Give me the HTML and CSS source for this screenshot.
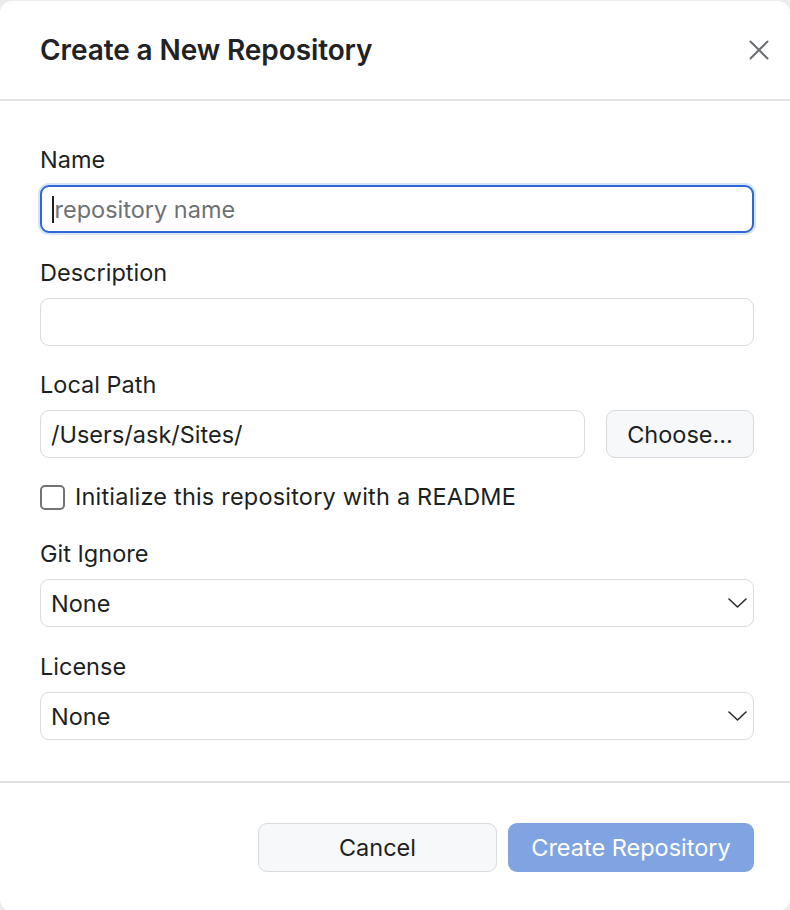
FILE: index.html
```html
<!DOCTYPE html>
<html lang="en">
<head>
<meta charset="utf-8">
<title>Create a New Repository</title>
<link rel="stylesheet" href="styles.css">
</head>
<body>
<div class="dialog">
  <header class="dialog-header">
    <h1 class="dialog-title">Create a New Repository</h1>
    <button class="close-btn" aria-label="Close">
      <svg width="20" height="20" viewBox="0 0 20 20"><path d="M1.5 1.5 L18.5 18.5 M18.5 1.5 L1.5 18.5" stroke="#6b6f75" stroke-width="2" stroke-linecap="round" fill="none"/></svg>
    </button>
  </header>
  <div class="dialog-body">
    <div class="field first">
      <div class="label">Name</div>
      <div class="input focused"><span class="caret"></span><span class="placeholder">repository name</span></div>
    </div>
    <div class="field">
      <div class="label">Description</div>
      <div class="input"></div>
    </div>
    <div class="field">
      <div class="label">Local Path</div>
      <div class="path-row">
        <div class="input grow">/Users/ask/Sites/</div>
        <button class="btn btn-secondary choose">Choose…</button>
      </div>
    </div>
    <div class="checkbox-row">
      <span class="checkbox"></span>
      <span class="checkbox-label">Initialize this repository with a README</span>
    </div>
    <div class="field gitignore">
      <div class="label">Git Ignore</div>
      <div class="input select">None
        <svg class="chevron" width="19" height="10" viewBox="0 0 19 10"><path d="M1 1 L9.5 9 L18 1" stroke="#2b2b2b" stroke-width="1.6" fill="none" stroke-linecap="round" stroke-linejoin="round"/></svg>
      </div>
    </div>
    <div class="field">
      <div class="label">License</div>
      <div class="input select">None
        <svg class="chevron" width="19" height="10" viewBox="0 0 19 10"><path d="M1 1 L9.5 9 L18 1" stroke="#2b2b2b" stroke-width="1.6" fill="none" stroke-linecap="round" stroke-linejoin="round"/></svg>
      </div>
    </div>
  </div>
  <footer class="dialog-footer">
    <button class="btn btn-secondary cancel">Cancel</button>
    <button class="btn btn-primary create">Create Repository</button>
  </footer>
</div>
</body>
</html>
```
FILE: styles.css
```css
* { box-sizing: border-box; }
html, body { margin: 0; padding: 0; }
body {
  background: #ececec;
  font-family: Inter, "Noto Sans", "Liberation Sans", sans-serif;
  color: #1d1f23;
}
.dialog {
  width: 790px;
  height: 910px;
  margin-top: 1px;
  background: #fff;
  border-radius: 12px;
  overflow: hidden;
}
.dialog-header {
  height: 100px;
  border-bottom: 2px solid #e1e1e1;
  display: flex;
  align-items: center;
  justify-content: space-between;
  padding: 0 21px 0 40px;
}
.dialog-title {
  margin: 0;
  font-size: 28px;
  font-weight: 600;
  letter-spacing: -0.1px;
  color: #1f2226;
}
.close-btn {
  border: 0;
  background: none;
  padding: 0;
  width: 20px;
  height: 20px;
  display: flex;
}
.dialog-body {
  padding: 47px 36px 41px 40px;
}
.field { margin-bottom: 27px; }
.field.first { margin-bottom: 28px; }
.label {
  font-size: 23.5px;
  line-height: 24px;
  margin-bottom: 13px;
  color: #1d1f23;
}
.input {
  height: 48px;
  border: 1.5px solid #dadcdf;
  border-radius: 9px;
  padding: 0 10px;
  font-size: 23.5px;
  display: flex;
  align-items: center;
  color: #1d1f23;
  background: #fff;
}
.input.focused {
  border: 2px solid #2d68d8;
  box-shadow: 0 0 0 2px rgba(45, 104, 216, 0.18);
  padding-left: 10px;
}
.caret {
  width: 1.5px;
  height: 27px;
  background: #1d1f23;
  margin-right: 1px;
}
.placeholder { color: #6e7175; }
.path-row {
  display: flex;
  gap: 21px;
}
.grow { flex: 1; }
.btn {
  font-family: inherit;
  font-size: 23.5px;
  border-radius: 9px;
  height: 48px;
  cursor: pointer;
}
.btn-secondary {
  background: #f6f8fa;
  border: 1.5px solid #d8dbdf;
  color: #1d1f23;
}
.choose { width: 148px; padding: 0; }
.checkbox-row {
  display: flex;
  align-items: center;
  gap: 10px;
  height: 24px;
  margin-bottom: 33px;
}
.checkbox {
  width: 25px;
  height: 25px;
  border: 2px solid #737373;
  border-radius: 5px;
  background: #fff;
}
.checkbox-label {
  font-size: 23.5px;
  line-height: 24px;
  letter-spacing: 0.2px;
  color: #1d1f23;
}
.gitignore { margin-bottom: 28px; }
.field:last-child { margin-bottom: 0; }
.select { justify-content: space-between; padding-right: 6px; }
.chevron { display: block; }
.dialog-footer {
  border-top: 2px solid #e1e1e1;
  display: flex;
  justify-content: flex-end;
  gap: 11px;
  padding: 40px 36px 0 0;
}
.cancel { width: 239px; height: 49px; }
.btn-primary {
  background: #80a4e1;
  border: 0;
  color: #fff;
}
.create { width: 246px; height: 49px; }
```
